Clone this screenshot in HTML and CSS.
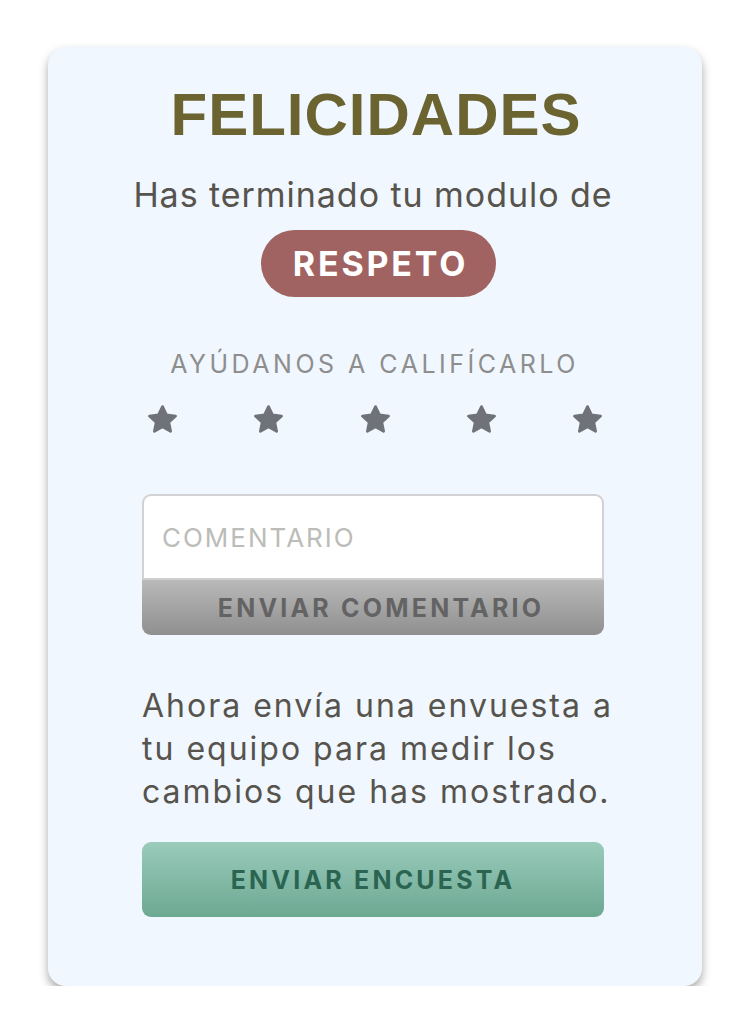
FILE: index.html
```html
<!DOCTYPE html>
<html lang="es">
<head>
<meta charset="utf-8">
<title>Felicidades</title>
<link rel="stylesheet" href="styles.css">
</head>
<body>
<div class="card">
  <h1 class="title">FELICIDADES</h1>
  <p class="lead">Has terminado tu modulo de</p>
  <div class="pill">RESPETO</div>
  <p class="rate-label">AYÚDANOS A CALIFÍCARLO</p>
  <div class="stars">
    <svg class="star" viewBox="0 0 24 24"><polygon points="12,2.6 14.9,8.7 21.5,9.5 16.6,14 17.9,20.6 12,17.3 6.1,20.6 7.4,14 2.5,9.5 9.1,8.7"/></svg>
    <svg class="star" viewBox="0 0 24 24"><polygon points="12,2.6 14.9,8.7 21.5,9.5 16.6,14 17.9,20.6 12,17.3 6.1,20.6 7.4,14 2.5,9.5 9.1,8.7"/></svg>
    <svg class="star" viewBox="0 0 24 24"><polygon points="12,2.6 14.9,8.7 21.5,9.5 16.6,14 17.9,20.6 12,17.3 6.1,20.6 7.4,14 2.5,9.5 9.1,8.7"/></svg>
    <svg class="star" viewBox="0 0 24 24"><polygon points="12,2.6 14.9,8.7 21.5,9.5 16.6,14 17.9,20.6 12,17.3 6.1,20.6 7.4,14 2.5,9.5 9.1,8.7"/></svg>
    <svg class="star" viewBox="0 0 24 24"><polygon points="12,2.6 14.9,8.7 21.5,9.5 16.6,14 17.9,20.6 12,17.3 6.1,20.6 7.4,14 2.5,9.5 9.1,8.7"/></svg>
  </div>
  <div class="comment">
    <div class="comment-input">COMENTARIO</div>
    <div class="comment-btn">ENVIAR COMENTARIO</div>
  </div>
  <div class="body-wrap">
    <p class="body-text">Ahora envía una envuesta a tu equipo para medir los cambios que has mostrado.</p>
  </div>
  <div class="survey-btn">ENVIAR ENCUESTA</div>
</div>
</body>
</html>
```
FILE: styles.css
```css
* { box-sizing: border-box; }
html, body { margin: 0; padding: 0; background: #ffffff; }
body { font-family: Inter, "Noto Sans", sans-serif; }

.card {
  margin: 47px 0 0 48px;
  width: 654px;
  height: 939px;
  background: #f0f7fe;
  border-radius: 18px;
  box-shadow: 0 5px 10px rgba(0, 0, 0, 0.34);
  padding: 33px 98px 0 94px;
  display: flex;
  flex-direction: column;
  align-items: center;
}

.title {
  margin: 0 0 0 6px;
  font-family: "Liberation Sans", Arial, sans-serif;
  font-weight: 700;
  font-size: 60px;
  line-height: 70px;
  letter-spacing: 1px;
  color: #6b6431;
}

.lead {
  margin: 25px 0 0;
  font-size: 34px;
  line-height: 40px;
  letter-spacing: 0.95px;
  color: #57534d;
  white-space: nowrap;
}

.pill {
  margin: 15px 0 0 11px;
  height: 67px;
  padding: 0 28px 0 32px;
  border-radius: 34px;
  background: #a06362;
  color: #ffffff;
  font-weight: 700;
  font-size: 34px;
  letter-spacing: 2.8px;
  display: flex;
  align-items: center;
}

.rate-label {
  margin: 52px 0 0;
  padding-left: 3px;
  font-size: 25px;
  line-height: 30px;
  letter-spacing: 3.5px;
  color: #8e8e8e;
  white-space: nowrap;
}

.stars {
  margin-top: 24px;
  width: 100%;
  display: flex;
  justify-content: space-between;
  padding: 0 0 0 4px;
}

.star {
  width: 33px;
  height: 33px;
  display: block;
}
.star polygon {
  fill: #6f7278;
  stroke: #6f7278;
  stroke-width: 2;
  stroke-linejoin: round;
}

.comment {
  margin-top: 58px;
  width: 100%;
}

.comment-input {
  height: 84px;
  background: #ffffff;
  border: 2px solid #d2d2d4;
  border-bottom: none;
  border-radius: 9px 9px 0 0;
  padding-left: 18px;
  display: flex;
  align-items: center;
  font-size: 26px;
  letter-spacing: 2px;
  color: #bcbcb8;
}

.comment-btn {
  height: 57px;
  border-radius: 0 0 9px 9px;
  background: linear-gradient(#b9b9b9, #8f8f8f);
  border-top: 2px solid #cfcfcf;
  display: flex;
  align-items: center;
  justify-content: center;
  padding-left: 16px;
  font-size: 25px;
  font-weight: 700;
  letter-spacing: 3.2px;
  color: #636363;
}

.body-wrap {
  margin-top: 49px;
  width: 100%;
}

.body-text {
  margin: 0 -14px 0 0;
  font-size: 32px;
  line-height: 43px;
  letter-spacing: 2px;
  color: #57534d;
}

.survey-btn {
  margin-top: 29px;
  width: 100%;
  height: 75px;
  border-radius: 9px;
  background: linear-gradient(#9acbbb, #6ca892);
  display: flex;
  align-items: center;
  justify-content: center;
  font-size: 25px;
  font-weight: 700;
  letter-spacing: 3.2px;
  color: #2b6552;
}
```
